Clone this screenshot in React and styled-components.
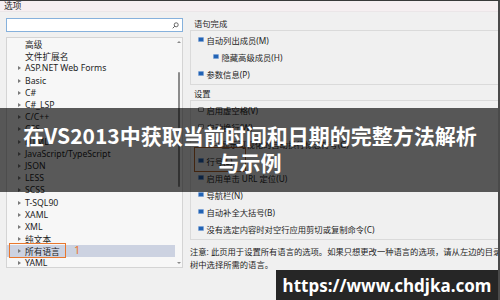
import React from "react";
import styled, { createGlobalStyle } from "styled-components";

const GlobalStyle = createGlobalStyle`
  html, body {
    margin: 0;
    padding: 0;
    background: #f0f0f0;
    overflow: hidden;
  }
  * { box-sizing: border-box; }
`;

const uiFont = `"Noto Sans", "Noto Sans CJK SC", sans-serif`;

const Window = styled.div`
  position: relative;
  width: 500px;
  height: 300px;
  background: #f0f0f0;
  border-top: 1px solid #3a3a3a;
  border-right: 2px solid #4a4a4a;
  font-family: ${uiFont};
  font-size: 8.7px;
  color: #1e1e1e;
  overflow: hidden;
`;

const TitleBar = styled.div`
  height: 11px;
  line-height: 11px;
  padding-left: 4px;
  background: #f6eff1;
  border-bottom: 1px solid #ebe6e8;
`;

const Body = styled.div`
  display: flex;
  padding-left: 6px;
`;

const LeftPane = styled.div`
  flex: none;
  width: 177px;
  display: flex;
  flex-direction: column;
  padding-top: 6px;
`;

const SearchBox = styled.div`
  height: 14px;
  background: #fff;
  border: 1px solid #86b1dc;
  display: flex;
  align-items: center;
  justify-content: flex-end;
  padding-right: 3px;
`;

const Tree = styled.div`
  position: relative;
  margin-top: 5px;
  height: 231px;
  background: #f7f7f7;
  border: 1px solid #d4d4d4;
  padding-right: 7px;
`;

const TreeRow = styled.div`
  position: relative;
  height: 12.2px;
  display: flex;
  align-items: center;
  padding-left: 11px;
  background: ${(p) => (p.$selected ? "#ccd2e1" : "transparent")};
  white-space: nowrap;
`;

const Arrow = styled.span`
  width: 7px;
  height: 5px;
  display: flex;
  align-items: center;
  &::before {
    content: "";
    display: ${(p) => (p.$hidden ? "none" : "block")};
    border-left: 3px solid #7a7a7a;
    border-top: 2.5px solid transparent;
    border-bottom: 2.5px solid transparent;
  }
`;

const Mark = styled.div`
  position: absolute;
  left: 2px;
  top: -2px;
  width: 57px;
  height: 15px;
  border: 1.5px solid #e8772e;
`;

const MarkNumber = styled.span`
  position: absolute;
  left: 67px;
  top: -2px;
  color: #e8772e;
  font-size: 11px;
  line-height: 14px;
`;

const ScrollBar = styled.div`
  position: absolute;
  top: 0;
  right: 0;
  bottom: 0;
  width: 7px;
  display: flex;
  flex-direction: column;
  align-items: center;
  justify-content: space-between;
  padding: 3px 0;
`;

const ScrollArrow = styled.span`
  display: block;
  border-left: 2px solid transparent;
  border-right: 2px solid transparent;
  ${(p) =>
    p.$down
      ? "border-top: 2.5px solid #8a8a8a;"
      : "border-bottom: 2.5px solid #8a8a8a;"}
`;

const Thumb = styled.div`
  position: absolute;
  top: 34px;
  left: 2.5px;
  width: 2.5px;
  height: 115px;
  background: #8c8c8c;
  border-radius: 1px;
`;

const RightPane = styled.div`
  flex: 1;
  min-width: 0;
  margin-left: 7px;
  padding-top: 6px;
  display: flex;
  flex-direction: column;
  font-size: 8.3px;
`;

const SectionLabel = styled.div`
  line-height: 12px;
  height: 12px;
  padding-left: 4px;
  margin-top: ${(p) => p.$gap || 0}px;
`;

const Group = styled.div`
  position: relative;
  border: 1px solid #dadada;
  border-right: none;
  padding: 0 0 ${(p) => p.$bottom || 2}px 0;
`;

const CheckRow = styled.div`
  height: 17px;
  display: flex;
  align-items: center;
  gap: 3px;
  padding-left: ${(p) => 7 + (p.$level || 0) * 15}px;
  white-space: nowrap;
`;

const Box = styled.span`
  width: 5.5px;
  height: 5.5px;
  flex: none;
  background: ${(p) => (p.$on ? "#2263b4" : "#ffffff")};
  border: 1px solid ${(p) => (p.$on ? "#7ea3d4" : "#8a8a8a")};
  border-radius: 1px;
`;

const LineMark = styled.div`
  position: absolute;
  left: 3px;
  top: 46px;
  width: 52px;
  height: 25px;
  border: 1.5px solid #b8662e;
`;

const Note = styled.div`
  margin-top: 5px;
  line-height: 13px;
  white-space: nowrap;
`;

const Banner = styled.div`
  position: absolute;
  left: 0;
  top: 107px;
  width: 500px;
  height: 84px;
  background: rgba(0, 0, 0, 0.64);
  padding-top: 14px;
  text-align: center;
  color: #ffffff;
  font-family: "Noto Sans CJK SC", "Noto Sans", sans-serif;
  font-weight: 700;
  font-size: 21px;
  line-height: 27px;
`;

const BannerLine = styled.span`
  display: block;
`;

const UrlTag = styled.div`
  position: absolute;
  right: 0;
  bottom: 0;
  width: 222px;
  height: 30px;
  background: #262626;
  color: #ffffff;
  display: flex;
  align-items: center;
  justify-content: center;
  font-family: "Noto Sans", sans-serif;
  font-weight: 700;
  font-size: 17px;
`;

const treeItems = [
  { label: "高级", leaf: true },
  { label: "文件扩展名", leaf: true },
  { label: "ASP.NET Web Forms" },
  { label: "Basic" },
  { label: "C#" },
  { label: "C#_LSP" },
  { label: "C/C++" },
  { label: "CSS" },
  { label: "HTML" },
  { label: "JavaScript/TypeScript" },
  { label: "JSON" },
  { label: "LESS" },
  { label: "SCSS" },
  { label: "T-SQL90" },
  { label: "XAML" },
  { label: "XML" },
  { label: "纯文本" },
  { label: "所有语言", selected: true },
  { label: "YAML" },
];

const completion = [
  { label: "自动列出成员(M)", on: true },
  { label: "隐藏高级成员(H)", on: true, level: 1 },
  { label: "参数信息(P)", on: true },
];

const settings = [
  { label: "启用虚空格(V)", on: false },
  { label: "自动换行(W)", on: false },
  { label: "显示可视化的自动换行标志符号(G)", on: false, level: 1 },
  { label: "行号(L)", on: true },
  { label: "启用单击 URL 定位(U)", on: true },
  { label: "导航栏(N)", on: true },
  { label: "自动补全大括号(B)", on: true },
  { label: "没有选定内容时对空行应用剪切或复制命令(C)", on: true },
];

const SearchIcon = () => (
  <svg width="7" height="7" viewBox="0 0 8 8">
    <circle cx="4.8" cy="3.2" r="2.3" fill="none" stroke="#555" strokeWidth="1" />
    <line x1="3.2" y1="4.8" x2="0.8" y2="7.2" stroke="#555" strokeWidth="1.1" />
  </svg>
);

export default function App() {
  return (
    <>
      <GlobalStyle />
      <Window>
        <TitleBar>选项</TitleBar>
        <Body>
          <LeftPane>
            <SearchBox>
              <SearchIcon />
            </SearchBox>
            <Tree>
              {treeItems.map((item) => (
                <TreeRow key={item.label} $selected={item.selected}>
                  <Arrow $hidden={item.leaf} />
                  {item.label}
                  {item.selected && (
                    <>
                      <Mark />
                      <MarkNumber>1</MarkNumber>
                    </>
                  )}
                </TreeRow>
              ))}
              <ScrollBar>
                <ScrollArrow />
                <ScrollArrow $down />
                <Thumb />
              </ScrollBar>
            </Tree>
          </LeftPane>
          <RightPane>
            <SectionLabel>语句完成</SectionLabel>
            <Group>
              {completion.map((c) => (
                <CheckRow key={c.label} $level={c.level}>
                  <Box $on={c.on} />
                  {c.label}
                </CheckRow>
              ))}
            </Group>
            <SectionLabel $gap={3}>设置</SectionLabel>
            <Group $bottom={2}>
              {settings.map((c) => (
                <CheckRow key={c.label} $level={c.level}>
                  <Box $on={c.on} />
                  {c.label}
                </CheckRow>
              ))}
              <LineMark />
            </Group>
            <Note>
              注意: 此页用于设置所有语言的选项。如果只想更改一种语言的选项，请从左边的目录
              <br />
              树中选择所需的语言。
            </Note>
          </RightPane>
        </Body>
        <Banner>
          <BannerLine>在VS2013中获取当前时间和日期的完整方法解析</BannerLine>
          <BannerLine>与示例</BannerLine>
        </Banner>
        <UrlTag>https://www.chdjka.com</UrlTag>
      </Window>
    </>
  );
}
